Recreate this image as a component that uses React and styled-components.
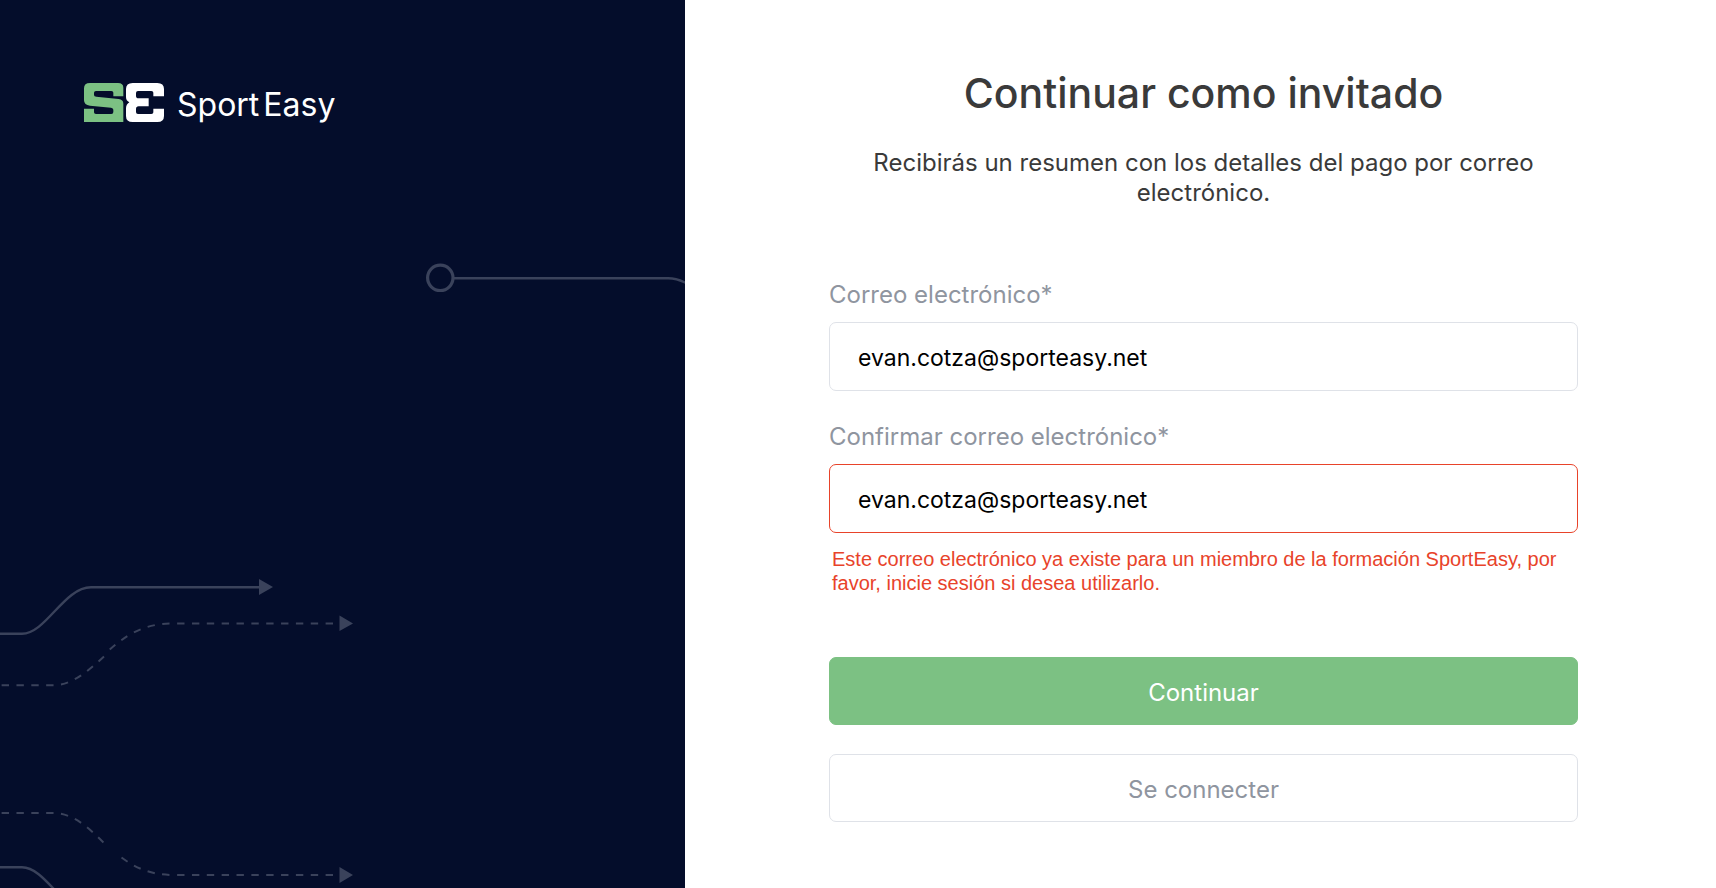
import React, { useState } from 'react';
import styled, { createGlobalStyle, css } from 'styled-components';

const colors = {
    navy: '#040d2b',
    line: '#3a425b',
    green: '#7cc183',
    text: '#3a3a3a',
    muted: '#8f959f',
    border: '#dfe2e8',
    error: '#e8432a',
};

const GlobalStyle = createGlobalStyle`
  * {
    box-sizing: border-box;
  }
  body {
    margin: 0;
    background: #fff;
    color: ${colors.text};
    font-family: Inter, 'Liberation Sans', sans-serif;
  }
`;

const Logo = () => (
    <LogoLink href="#">
        <svg width="80" height="39" viewBox="0 0 240 117" aria-hidden="true">
            <path
                fill={colors.green}
                d="M18 0H102Q118 0 118 14V40H88V29Q88 24 82 24H36Q30 24 30 29V36Q30 41 37 41L104 48Q118 50 118 62V117H0V77H30V88Q30 93 36 93H82Q88 93 88 87V80Q88 75 81 74L18 68Q0 66 0 52V16Q0 0 18 0Z"
            />
            <path
                fill="#fff"
                d="M146 0H220Q240 0 240 18V40H208V29Q208 24 202 24H162Q156 24 156 30V38Q156 46 164 46H194V70H164Q156 70 156 78V87Q156 93 162 93H202Q208 93 208 88V77H240V99Q240 117 220 117H146Q126 117 126 99V76Q126 64 136 58Q126 53 126 42V18Q126 0 146 0Z"
            />
        </svg>
        <LogoName>
            <span>Sport</span>
            <span>Easy</span>
        </LogoName>
    </LogoLink>
);

const Circuit = () => (
    <CircuitSvg aria-hidden="true">
        <g fill="none" stroke={colors.line} strokeWidth="2.4">
            <circle cx="440.3" cy="277.8" r="12.7" strokeWidth="3.2" />
            <path d="M454 278.2H668C674 278.2 680 280 686 283" />
            <path d="M0 633.7H22C46 633.7 64 587.3 91 587.3H260" />
            <path d="M0 867.3H22C46 867.3 64 914 91 914H260" />
            <g strokeWidth="2" strokeDasharray="7.4 7.45">
                <path d="M1.6 685.2H53C73 685.2 89 670 104 656.5" />
                <path d="M333 623.4H173C142 623.4 124 637 108.7 650.5" />
                <path d="M1.6 813H53C73 813 89 828 104 843" />
                <path d="M333 875H173C150 875 134 867 120.5 856.8" />
            </g>
        </g>
        <g fill={colors.line}>
            <path d="M259 579L273 587L259 595Z" />
            <path d="M339.5 615.5L353 623.4L339.5 631Z" />
            <path d="M339.5 867L353 875L339.5 883Z" />
        </g>
    </CircuitSvg>
);

const App = () => {
    const [email, setEmail] = useState('evan.cotza@sporteasy.net');
    const [confirmEmail, setConfirmEmail] = useState('evan.cotza@sporteasy.net');

    const handleSubmit = (event) => {
        event.preventDefault();
    };

    return (
        <Page>
            <GlobalStyle />
            <Aside>
                <Circuit />
                <Logo />
            </Aside>
            <Main>
                <Content>
                    <Title>Continuar como invitado</Title>
                    <Intro>Recibirás un resumen con los detalles del pago por correo electrónico.</Intro>
                    <Form onSubmit={handleSubmit} noValidate>
                        <Field>
                            <Label htmlFor="email">Correo electrónico*</Label>
                            <Input
                                id="email"
                                type="email"
                                value={email}
                                onChange={(event) => setEmail(event.target.value)}
                            />
                        </Field>
                        <Field>
                            <Label htmlFor="confirmEmail">Confirmar correo electrónico*</Label>
                            <Input
                                id="confirmEmail"
                                type="email"
                                value={confirmEmail}
                                onChange={(event) => setConfirmEmail(event.target.value)}
                                aria-invalid="true"
                                aria-describedby="confirmEmailError"
                                $invalid
                            />
                            <ErrorText id="confirmEmailError">
                                Este correo electrónico ya existe para un miembro de la formación SportEasy, por favor, inicie sesión si desea utilizarlo.
                            </ErrorText>
                        </Field>
                        <Actions>
                            <Button type="submit" $primary>Continuar</Button>
                            <Button type="button">Se connecter</Button>
                        </Actions>
                    </Form>
                </Content>
            </Main>
        </Page>
    );
};

export default App;

const Page = styled.div`
  display: grid;
  grid-template-columns: 685fr 1031fr;
  min-height: 100vh;
`;

const Aside = styled.aside`
  position: relative;
  overflow: hidden;
  padding: 83px 84px;
  background: ${colors.navy};
`;

// decorative lines painted behind the logo
const CircuitSvg = styled.svg`
  position: absolute;
  inset: 0;
  width: 100%;
  height: 100%;
`;

const LogoLink = styled.a`
  position: relative;
  display: flex;
  align-items: flex-start;
  gap: 13px;
  width: fit-content;
  color: #fff;
  text-decoration: none;
`;

const LogoName = styled.span`
  display: flex;
  gap: 4px;
  font-size: 32px;
  line-height: 44px;
`;

const Main = styled.main`
  display: flex;
  justify-content: center;
  padding: 63px 24px 63px 30px;
`;

const Content = styled.div`
  width: 100%;
  max-width: 749px;
`;

const Title = styled.h1`
  margin: 0 0 25px;
  font-size: 41px;
  font-weight: 500;
  line-height: 60px;
  text-align: center;
`;

const Intro = styled.p`
  margin: 0;
  padding: 0 32px;
  font-size: 24px;
  line-height: 30px;
  text-align: center;
`;

const Form = styled.form`
  display: flex;
  flex-direction: column;
  gap: 30px;
  margin-top: 71px;
`;

const Field = styled.div`
  display: flex;
  flex-direction: column;
`;

const Label = styled.label`
  margin-bottom: 11px;
  color: ${colors.muted};
  font-size: 24px;
  line-height: 32px;
`;

const Input = styled.input`
  height: 69px;
  padding: 2px 28px 0;
  border: 1px solid ${({ $invalid }) => ($invalid ? colors.error : colors.border)};
  border-radius: 7px;
  background: #fff;
  color: #000;
  font-family: inherit;
  font-size: 23px;
  outline: none;
`;

const ErrorText = styled.p`
  margin: 14px 0 0;
  padding: 0 3px;
  color: ${colors.error};
  font-family: 'Liberation Sans', sans-serif;
  font-size: 20px;
  line-height: 24px;
`;

const Actions = styled.div`
  display: flex;
  flex-direction: column;
  gap: 29px;
  margin-top: 32px;
`;

const Button = styled.button`
  height: 68px;
  padding: 2px 28px 0;
  border: 1px solid ${colors.border};
  border-radius: 7px;
  background: #fff;
  color: ${colors.muted};
  font-family: inherit;
  font-size: 24px;
  cursor: pointer;

  ${({ $primary }) => $primary && css`
    border-color: ${colors.green};
    background: ${colors.green};
    color: #fff;
  `}
`;
